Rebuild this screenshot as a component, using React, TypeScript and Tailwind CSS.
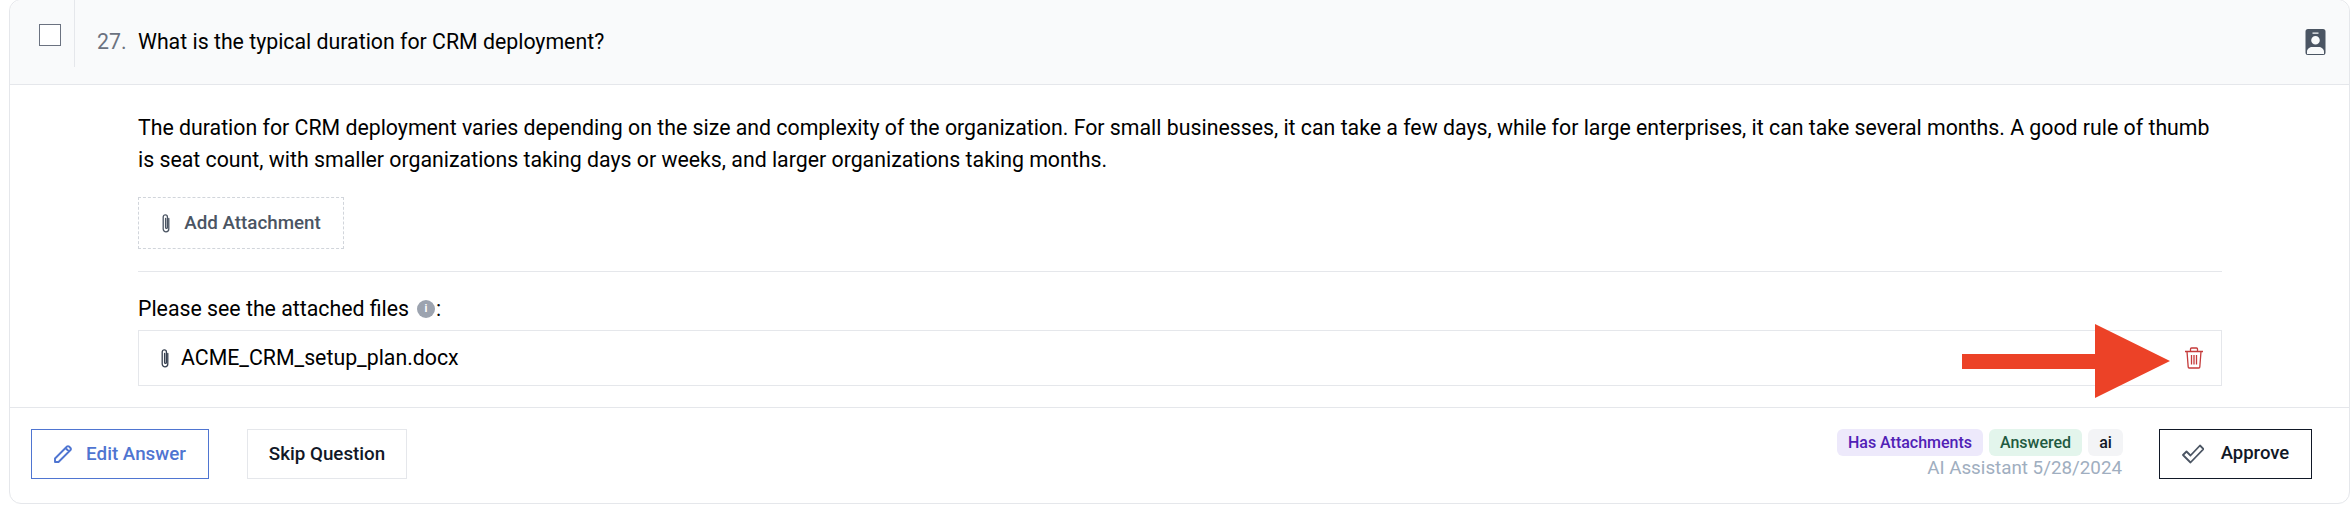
const font = "font-['Roboto',sans-serif]"

function Clip({ className }: { className: string }) {
  return (
    <svg viewBox="0 0 10 20" fill="none" stroke="currentColor" strokeWidth="1.300" strokeLinecap="round" className={className}>
      <path d="M7.800 5v10.500a2.800 2.800 0 0 1-5.600 0V3.500a2.100 2.100 0 0 1 4.200 0V14a.9.9 0 0 1-1.800 0V5" transform="translate(0 .5)" />
    </svg>
  )
}

function Tag({ className, children }: { className: string; children: string }) {
  return <span className={`flex h-[27px] items-center justify-center rounded-md text-[16px] font-medium ${className}`}>{children}</span>
}

export default function App() {
  return (
    <div className={`relative h-[510px] w-[2352px] bg-white pl-[9px] text-black ${font}`}>
      <div className="-mt-px h-[505px] w-[2341px] rounded-xl border border-[#e5e7eb]">
        {/* question header */}
        <div className="flex h-[85px] items-start rounded-t-xl border-b border-[#e5e7eb] bg-[#f9fafb]">
          <div className="flex h-[67px] w-[65px] shrink-0 border-r border-[#e5e7eb] pl-[29px] pt-[24px]">
            <div className="h-[22px] w-[22px] border border-[#6b7280] bg-white" />
          </div>
          <div className="flex h-[83px] flex-1 items-center pl-[22px] pr-[23px] text-[21.300px]">
            <span className="w-[41px] text-[#6b7280]">27.</span>
            <span>What is the typical duration for CRM deployment?</span>
            <svg viewBox="0 0 20 26" className="ml-auto h-[26px] w-[21px] text-[#4b5563]" fill="currentColor">
              <path fillRule="evenodd" d="M2.500 0h15A2.500 2.500 0 0 1 20 2.500v21a2.500 2.500 0 0 1-2.500 2.500h-15A2.500 2.500 0 0 1 0 23.500v-21A2.500 2.500 0 0 1 2.500 0ZM7 3.500v1.300h6V3.500H7Zm3 3.500a4.300 4.300 0 1 0 0 8.600 4.300 4.300 0 0 0 0-8.600ZM1.500 25h17v-2.500c0-2.500-3-4.500-5-4.500H6.500c-2 0-5 2-5 4.500V25Z" />
            </svg>
          </div>
        </div>

        {/* answer */}
        <div className="h-[323px] border-b border-[#e5e7eb] pl-[128px] pr-[127px]">
          <p className="pt-[27px] text-[21.300px] leading-[32px]">
            The duration for CRM deployment varies depending on the size and complexity of the organization. For small businesses, it can take a few days, while for large enterprises, it can take several months. A good rule of thumb is seat count, with smaller organizations taking days or weeks, and larger organizations taking months.
          </p>
          <button className="mt-[21px] flex h-[52px] w-[206px] items-center justify-center gap-[13px] border border-dashed border-[#d1d5db] text-[18.800px] font-medium text-[#4b5563]">
            <Clip className="h-[20px] w-[10px]" />
            Add Attachment
          </button>
          <div className="mt-[22px] border-t border-[#e5e7eb] pt-[24px]">
            <div className="flex h-[26px] items-center text-[21.300px]">
              Please see the attached files
              <span className="ml-[8px] mr-px flex h-[18px] w-[18px] items-center justify-center rounded-full bg-[#9ca3af] text-[11px] font-bold text-white">i</span>
              :
            </div>
            <div className="mt-[8px] flex h-[56px] items-center justify-between border border-[#e5e7eb] pl-[21px] pr-[17px] text-[21.300px]">
              <span className="flex items-center gap-[11px]">
                <Clip className="h-[20px] w-[10px] text-[#374151]" />
                ACME_CRM_setup_plan.docx
              </span>
              <svg viewBox="0 0 20 22" fill="none" stroke="#c53a3a" strokeWidth="1.300" className="h-[22px] w-[20px]">
                <path d="M1 4.500h18M6.500 4.500V2a1 1 0 0 1 1-1h5a1 1 0 0 1 1 1v2.500M3 4.500 4.200 20a1 1 0 0 0 1 1h9.600a1 1 0 0 0 1-1L17 4.500M7.500 8v9.500M10 8v9.500M12.500 8v9.500" />
              </svg>
            </div>
          </div>
        </div>

        {/* footer */}
        <div className="flex items-start pl-[21px] pr-[37px] pt-[21px]">
          <button className="flex h-[50px] w-[178px] items-center justify-center gap-[14px] border border-[#4f75d1] text-[18.800px] font-medium text-[#4f75d1]">
            <svg viewBox="0 0 18 18" fill="none" stroke="currentColor" strokeWidth="1.900" strokeLinejoin="round" className="h-[18px] w-[18px]">
              <path d="M1 17v-3.500L13 1.500a1.400 1.400 0 0 1 2 0l1.500 1.500a1.400 1.400 0 0 1 0 2L4.500 17H1ZM11.500 3l3.500 3.500" />
            </svg>
            Edit Answer
          </button>
          <button className="ml-[38px] h-[50px] w-[160px] border border-[#e5e7eb] text-[18.800px] font-medium text-[#111827]">Skip Question</button>
          <div className="ml-auto flex flex-col items-end">
            <div className="flex gap-[6px]">
              <Tag className="w-[146px] bg-[#ede9fb] text-[#5021b6]">Has Attachments</Tag>
              <Tag className="w-[93px] bg-[#e3f5ec] text-[#1f5a41]">Answered</Tag>
              <Tag className="w-[35px] bg-[#f3f4f6] text-[#111827]">ai</Tag>
            </div>
            <span className="pr-px text-[18.800px] leading-[24px] text-[#a0aec0]">AI Assistant 5/28/2024</span>
          </div>
          <button className="ml-[36px] flex h-[50px] w-[153px] items-center justify-center gap-[17px] border border-[#111827] text-[18.500px] font-medium text-[#111827]">
            <svg viewBox="0 0 22 20" fill="none" stroke="#4b5563" strokeWidth="1.800" strokeLinejoin="round" className="h-[20px] w-[22px]">
              <path d="M1 11 4.500 7.500 8.500 11.500 18 1.500 21.500 5 8.500 18.500 1 11Z" />
            </svg>
            Approve
          </button>
        </div>
      </div>

      {/* red annotation arrow */}
      <svg viewBox="0 0 208 74" className="absolute left-[1962px] top-[325px] h-[74px] w-[208px]" fill="#ec4227">
        <path d="M0 30h133V0l75 37-75 37V45H0Z" />
      </svg>
    </div>
  )
}
